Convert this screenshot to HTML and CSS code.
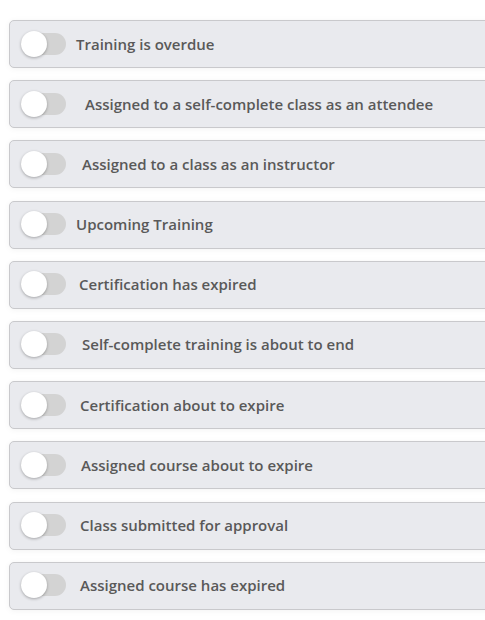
FILE: index.html
```html
<html>
	<head>
		<title>Notification Settings</title>
		<link rel="stylesheet" href="styles.css">
	</head>
	<body>
		<div class="settings">
			<label class="setting">
				<span class="toggle"><span class="knob"></span></span>
				<span class="name pad-0">Training is overdue</span>
			</label>
			<label class="setting">
				<span class="toggle"><span class="knob"></span></span>
				<span class="name pad-9">Assigned to a self-complete class as an attendee</span>
			</label>
			<label class="setting">
				<span class="toggle"><span class="knob"></span></span>
				<span class="name pad-6">Assigned to a class as an instructor</span>
			</label>
			<label class="setting">
				<span class="toggle"><span class="knob"></span></span>
				<span class="name pad-0">Upcoming Training</span>
			</label>
			<label class="setting">
				<span class="toggle"><span class="knob"></span></span>
				<span class="name pad-3">Certification has expired</span>
			</label>
			<label class="setting">
				<span class="toggle"><span class="knob"></span></span>
				<span class="name pad-6">Self-complete training is about to end</span>
			</label>
			<label class="setting">
				<span class="toggle"><span class="knob"></span></span>
				<span class="name pad-4">Certification about to expire</span>
			</label>
			<label class="setting">
				<span class="toggle"><span class="knob"></span></span>
				<span class="name pad-5">Assigned course about to expire</span>
			</label>
			<label class="setting">
				<span class="toggle"><span class="knob"></span></span>
				<span class="name pad-4">Class submitted for approval</span>
			</label>
			<label class="setting">
				<span class="toggle"><span class="knob"></span></span>
				<span class="name pad-4">Assigned course has expired</span>
			</label>
		</div>
	</body>
</html>
```

FILE: styles.css
```css
body {
	margin: 0;
	background: #ffffff;
	overflow: hidden;
	font-family: "Open Sans", "Noto Sans", sans-serif;
}

.settings {
	display: flex;
	flex-direction: column;
	gap: 12.2px;
	padding: 20px 0 0 9px;
	width: 500px;
}

.setting {
	display: flex;
	align-items: center;
	height: 48px;
	box-sizing: border-box;
	padding-left: 11px;
	padding-bottom: 1px;

	background: #e9eaee;
	border: 1px solid #c9c9cc;
	border-radius: 5px;
	box-shadow: 0 1px 6px rgba(0, 0, 0, 0.05);
}

.toggle {
	position: relative;
	display: inline-block;
	width: 45px;
	height: 22px;
	border-radius: 11px;
	background: #d3d3d3;
	flex: none;
}

.toggle .knob {
	position: absolute;
	left: 0;
	top: -2px;
	width: 26px;
	height: 26px;
	border-radius: 50%;
	background: #ffffff;
	box-shadow: 0 1px 3px rgba(0, 0, 0, 0.3);
}

.name {
	font-size: 15px;
	font-weight: 600;
	color: #595959;
	padding-left: 10px;
}

.pad-3 { padding-left: 13px; }
.pad-4 { padding-left: 14px; }
.pad-5 { padding-left: 15px; }
.pad-6 { padding-left: 16px; }
.pad-9 { padding-left: 19px; }
```
